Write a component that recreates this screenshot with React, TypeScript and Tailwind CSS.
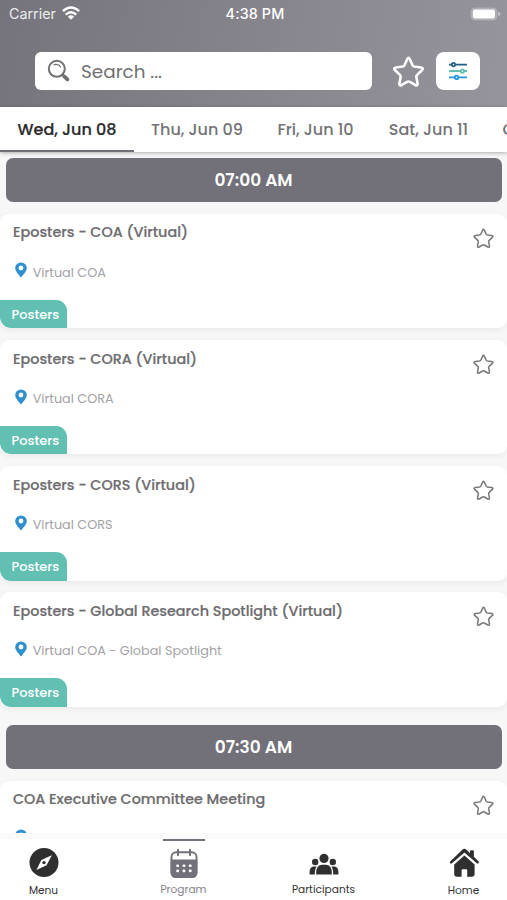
type Session = {
  title: string;
  location: string;
  tag?: string;
};

type Slot = {
  time: string;
  sessions: Session[];
};

const days = [
  { label: 'Wed, Jun 08', width: 'w-[134px]', active: true },
  { label: 'Thu, Jun 09', width: 'w-[126px]', active: false },
  { label: 'Fri, Jun 10', width: 'w-[111px]', active: false },
  { label: 'Sat, Jun 11', width: 'w-[115px]', active: false },
];

const slots: Slot[] = [
  {
    time: '07:00 AM',
    sessions: [
      { title: 'Eposters - COA (Virtual)', location: 'Virtual COA', tag: 'Posters' },
      { title: 'Eposters - CORA (Virtual)', location: 'Virtual CORA', tag: 'Posters' },
      { title: 'Eposters - CORS (Virtual)', location: 'Virtual CORS', tag: 'Posters' },
      { title: 'Eposters - Global Research Spotlight (Virtual)', location: 'Virtual COA - Global Spotlight', tag: 'Posters' },
    ],
  },
  {
    time: '07:30 AM',
    sessions: [{ title: 'COA Executive Committee Meeting', location: '' }],
  },
];

const StarIcon = ({ className }: { className?: string }) => (
  <svg viewBox="0 0 24 24" fill="none" stroke="currentColor" strokeLinejoin="round" className={className}>
    <path d="M11.1 3.3Q12 1.3 12.9 3.3L14.8 7.4Q15.2 8.1 16 8.25L20.6 8.95Q22.7 9.3 21.2 10.8L17.9 14Q17.2 14.6 17.4 15.4L18.2 19.7Q18.5 21.9 16.6 20.9L12.9 18.8Q12 18.3 11.1 18.8L7.4 20.9Q5.5 21.9 5.8 19.7L6.6 15.4Q6.8 14.6 6.1 14L2.8 10.8Q1.3 9.3 3.4 8.95L8 8.25Q8.8 8.1 9.2 7.4Z" />
  </svg>
);

const PinIcon = ({ className }: { className?: string }) => (
  <svg viewBox="0 0 12 16" className={className}>
    <path
      fill="currentColor"
      fillRule="evenodd"
      d="M6 0.4A5.8 5.8 0 0 0 .2 6.1C.2 9.2 3 11.8 6 15.6C9 11.8 11.8 9.2 11.8 6.1A5.8 5.8 0 0 0 6 .4ZM6 3.6A2.4 2.4 0 1 1 6 8.4A2.4 2.4 0 0 1 6 3.6Z"
    />
  </svg>
);

const SearchIcon = () => (
  <svg viewBox="0 0 24 24" fill="none" stroke="currentColor" strokeLinecap="round" className="h-6 w-6">
    <circle cx="9.8" cy="9.8" r="8" strokeWidth="2" />
    <path d="M7.2 5.7Q11.4 4.4 13.5 8" strokeWidth="1.3" />
    <path d="M15.6 15.6L17.3 17.1" strokeWidth="2.2" />
    <path d="M17.2 17.4L20.4 20.4" strokeWidth="3.8" />
  </svg>
);

const FilterIcon = () => (
  <svg viewBox="0 0 18 20" fill="none" strokeWidth="1.8" className="h-5 w-[18px]">
    <g stroke="#235f86">
      <path d="M0 3.6H2.8M6.2 3.6H18" />
      <circle cx="4.5" cy="3.6" r="1.7" />
    </g>
    <g stroke="#63bdb5">
      <path d="M0 10H11.6M15.2 10H18" />
      <circle cx="13.4" cy="10" r="1.7" />
    </g>
    <g stroke="#2295e6">
      <path d="M0 16.4H5.7M9.3 16.4H18" />
      <circle cx="7.5" cy="16.4" r="1.7" />
    </g>
  </svg>
);

const WifiIcon = () => (
  <svg viewBox="0 0 18 14" fill="none" stroke="currentColor" strokeWidth="2.5" className="-mt-[2px] h-[14px] w-[18px]">
    <path d="M.9 5.2Q9-2.2 17.1 5.2" />
    <path d="M3.8 8.6Q9 3.9 14.2 8.6" />
    <path d="M9 13.7L5.8 10.5Q9 7.8 12.2 10.5Z" fill="currentColor" stroke="none" />
  </svg>
);

const BatteryIcon = () => (
  <svg viewBox="0 0 31 14" className="-mt-[1px] h-[14px] w-[31px]">
    <rect x=".9" y=".9" width="26" height="12.2" rx="4" fill="#fff" fillOpacity=".2" stroke="#fff" strokeOpacity=".2" />
    <rect x="2.8" y="2.6" width="22.2" height="8.8" rx="2" fill="#fff" />
    <path d="M28.2 4.6Q30.4 5.6 30.4 7T28.2 9.4Z" fill="#fff" fillOpacity=".45" />
  </svg>
);

const CompassIcon = () => (
  <svg viewBox="0 0 30 30" className="h-[30px] w-[30px]">
    <circle cx="15" cy="14.6" r="14.5" fill="#2f2f2f" />
    <path d="M22.8 7.2L17.6 17.3L7.4 22L12.4 11.9Z" fill="#fff" />
    <circle cx="15" cy="14.6" r="1.7" fill="#2f2f2f" />
  </svg>
);

const CalendarIcon = () => (
  <svg viewBox="0 0 30 30" className="h-[30px] w-[30px] text-[#727079]">
    <rect x="2.5" y="4.2" width="25" height="25" rx="4.6" fill="none" stroke="currentColor" strokeWidth="1.9" />
    <path d="M1.6 11.6H28.4V24.6A5.4 5.4 0 0 1 23 30H7A5.4 5.4 0 0 1 1.6 24.6Z" fill="currentColor" />
    <path d="M9 1.8V7.2M21 1.8V7.2" stroke="currentColor" strokeWidth="1.9" strokeLinecap="round" />
    <g fill="#fff">
      <rect x="7.3" y="16.4" width="2.7" height="2.6" rx=".8" />
      <rect x="13.6" y="16.4" width="2.7" height="2.6" rx=".8" />
      <rect x="19.9" y="16.4" width="2.7" height="2.6" rx=".8" />
      <rect x="7.3" y="21.6" width="2.7" height="2.6" rx=".8" />
      <rect x="13.6" y="21.6" width="2.7" height="2.6" rx=".8" />
      <rect x="19.9" y="21.6" width="2.7" height="2.6" rx=".8" />
    </g>
  </svg>
);

const PeopleIcon = () => (
  <svg viewBox="0 0 30 30" fill="#2f2f2f" className="h-[30px] w-[30px]">
    <circle cx="15" cy="10.4" r="4.6" />
    <circle cx="6.2" cy="14" r="3.2" />
    <circle cx="23.8" cy="14" r="3.2" />
    <path d="M7.2 26.4V23.8Q7.6 17.2 13 16.8H17Q22.4 17.2 22.8 23.8V26.4Z" />
    <path d="M.6 26.4V23.6Q1 19 4.4 18.6H7.6Q5.8 21 5.8 26.4Z" />
    <path d="M29.4 26.4V23.6Q29 19 25.6 18.6H22.4Q24.2 21 24.2 26.4Z" />
  </svg>
);

const HomeIcon = () => (
  <svg viewBox="0 0 30 30" fill="#2f2f2f" className="h-[30px] w-[30px]">
    <path d="M15.4 .8Q16.4 .8 17.2 1.6L21 5.2V3.4Q21 2.2 22.2 2.2H23.6Q24.9 2.2 24.9 3.4V8.8L29.6 13.4Q30.2 14.4 29.6 15.2Q28.8 16 27.8 15.2L15.4 4.4L3 15.2Q2 16 1.2 15.2Q.4 14.4 1.2 13.4L13.6 1.6Q14.4 .8 15.4 .8Z" />
    <path d="M15.4 7.6L25.6 16.6V26Q25.6 28.8 22.8 28.8H18.2V22.2Q18.2 21.2 17.2 21.2H13.6Q12.6 21.2 12.6 22.2V28.8H8Q5.2 28.8 5.2 26V16.6Z" />
  </svg>
);

const navItems = [
  { label: 'Menu', icon: CompassIcon, labelTop: 'mt-[5px]', active: false },
  { label: 'Program', icon: CalendarIcon, labelTop: 'mt-[4px]', active: true },
  { label: 'Participants', icon: PeopleIcon, labelTop: 'mt-[4px]', active: false },
  { label: 'Home', icon: HomeIcon, labelTop: 'mt-[5px]', active: false },
];

const TimeBar = ({ time }: { time: string }) => (
  <div className="mx-[5.5px] flex h-11 items-center justify-center rounded-[7px] bg-[#727079] pt-[2px] text-[17px] font-semibold text-white">
    {time}
  </div>
);

const SessionCard = ({ session }: { session: Session }) => (
  <div className="flex h-[114.3px] flex-col overflow-hidden rounded-[9px] bg-white shadow-[0_2px_6px_rgba(0,0,0,0.06)]">
    <div className="flex justify-between pl-[13px] pr-[12px] pt-[8.6px]">
      <h3 className="text-[14.36px] font-medium leading-5 text-[#6d6c6f] [-webkit-text-stroke:0.2px_#6d6c6f]">{session.title}</h3>
      <StarIcon className="mt-[4.4px] h-[23px] w-[23px] stroke-[1.6] text-[#7b7a7e]" />
    </div>
    <div className="flex h-[33px] items-center pl-[15px] pt-[11px]">
      <PinIcon className="-mt-[3px] h-4 w-3 text-[#3090cf]" />
      <p className="ml-[5.7px] pt-[2px] text-[12.8px] leading-5 text-[#a3a2a6]">{session.location}</p>
    </div>
    {session.tag && (
      <div className="mt-auto flex h-[28.5px] w-[67px] items-center rounded-bl-[11px] rounded-tr-[11px] bg-[#62c0b3] pl-[11.5px] pt-[1.4px] text-[13px] font-medium text-white">
        {session.tag}
      </div>
    )}
  </div>
);

export default function App() {
  return (
    <div className="flex h-[900px] w-[507px] flex-col overflow-hidden bg-[#f7f7f8] font-['Poppins','Inter',sans-serif]">
      <header className="h-[107px] shrink-0 bg-linear-[100deg,#75737c,#96949d]">
        <div className="grid h-7 grid-cols-3 items-center pl-[9px] pr-[6px] font-['Inter',sans-serif] text-[14.3px] text-white">
          <div className="flex items-center gap-[6px]">
            <span className="text-[#ececee]">Carrier</span>
            <WifiIcon />
          </div>
          <span className="text-center font-medium tracking-[0.15px]">4:38 PM</span>
          <div className="flex justify-end">
            <BatteryIcon />
          </div>
        </div>
        <div className="flex items-center pl-[35px] pt-[24px]">
          <div className="flex h-[38px] w-[337px] items-center gap-[10px] rounded-[6px] bg-white pl-[12px] text-[#707072]">
            <SearchIcon />
            <span className="pt-[2px] text-[18.4px]">Search ...</span>
          </div>
          <StarIcon className="ml-[19px] mt-[2px] h-[36px] w-[35px] stroke-[1.8] text-white" />
          <button className="ml-[10px] flex h-[38px] w-[44px] items-center justify-center rounded-[8px] bg-white">
            <FilterIcon />
          </button>
        </div>
      </header>

      <div className="z-10 flex h-[45px] shrink-0 overflow-hidden bg-white text-[16px] shadow-[0_1px_4px_rgba(0,0,0,0.3)]">
        {days.map((day) => (
          <div
            key={day.label}
            className={`flex shrink-0 items-center justify-center whitespace-nowrap border-b-2 pt-[3px] font-medium ${day.width} ${
              day.active ? 'border-[#727079] text-[#2b2b2d] [-webkit-text-stroke:0.2px_#2b2b2d]' : 'border-transparent text-[#737275]'
            }`}
          >
            {day.label}
          </div>
        ))}
        <div className="flex shrink-0 items-center border-b-2 border-transparent pl-[16.5px] pt-[3px] font-medium text-[#737275]">O</div>
      </div>

      <main className="min-h-0 flex-1 overflow-hidden pt-[6px]">
        {slots.map((slot) => (
          <section key={slot.time} className="mb-[18px]">
            <TimeBar time={slot.time} />
            <div className="mt-[11.9px] flex flex-col gap-[11.9px]">
              {slot.sessions.map((session) => (
                <SessionCard key={session.title} session={session} />
              ))}
            </div>
          </section>
        ))}
      </main>

      <nav className="z-10 flex h-[67px] shrink-0 justify-between border-t-[6px] border-[#fafafa] bg-white px-[11.5px]">
        {navItems.map(({ label, icon: Icon, labelTop, active }) => (
          <div key={label} className="flex w-16 flex-col items-center">
            <div className={`h-[2px] w-[42px] ${active ? 'bg-[#727079]' : ''}`} />
            <div className="mt-[7px]">
              <Icon />
            </div>
            <span className={`whitespace-nowrap text-[10.6px] leading-4 ${labelTop} ${active ? 'text-[#858388]' : 'text-[#333]'}`}>{label}</span>
          </div>
        ))}
      </nav>
    </div>
  );
}
